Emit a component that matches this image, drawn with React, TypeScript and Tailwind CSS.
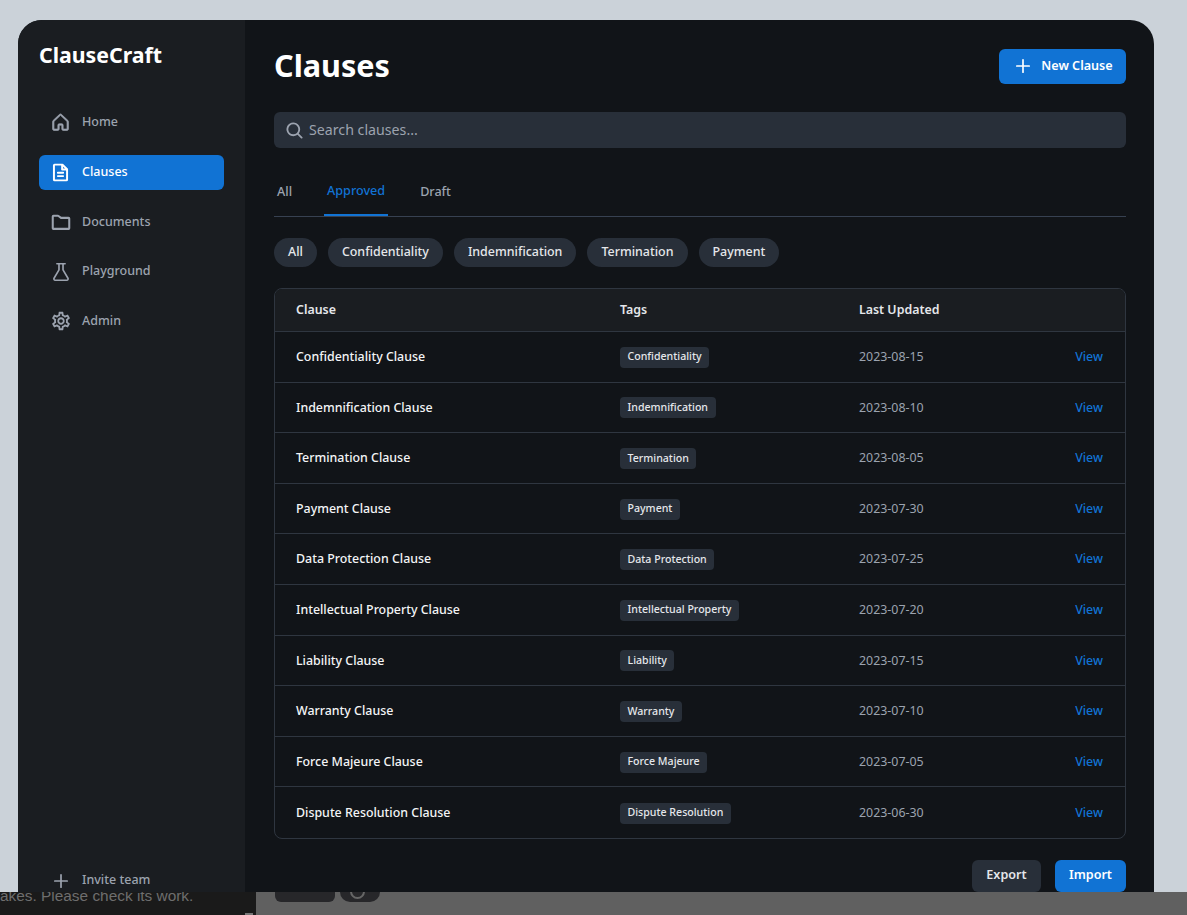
import React from "react";
import { PiFileTextBold, PiFolderSimpleBold, PiPlusBold, PiMagnifyingGlassBold } from "react-icons/pi";
import { MdOutlineSettings } from "react-icons/md";

function HomeIcon({ className }: { className?: string }) {
  return (
    <svg viewBox="0 0 256 256" fill="currentColor" stroke="currentColor" strokeWidth="9" className={className}>
      <path d="M218.83,103.77l-80-75.48a1.14,1.14,0,0,1-.11-.11,16,16,0,0,0-21.53,0l-.11.11L37.17,103.77A16,16,0,0,0,32,115.55V208a16,16,0,0,0,16,16H96a16,16,0,0,0,16-16V160h32v48a16,16,0,0,0,16,16h48a16,16,0,0,0,16-16V115.55A16,16,0,0,0,218.83,103.77ZM208,208H160V160a16,16,0,0,0-16-16H112a16,16,0,0,0-16,16v48H48V115.55l.11-.1L128,40l79.9,75.43.11.1Z" />
    </svg>
  );
}

function FlaskIcon({ className }: { className?: string }) {
  return (
    <svg viewBox="0 0 24 24" fill="none" stroke="currentColor" strokeWidth="1.8" strokeLinecap="round" strokeLinejoin="round" className={className}>
      <path d="M7.5 3h9M9.8 3v6.6L4.4 18.8A1.5 1.5 0 0 0 5.7 21h12.6a1.5 1.5 0 0 0 1.3-2.2l-5.4-9.2V3" />
    </svg>
  );
}

const nav = [
  { label: "Home", icon: HomeIcon, size: "size-[21px]" },
  { label: "Clauses", icon: PiFileTextBold, size: "size-[21px]", active: true },
  { label: "Documents", icon: PiFolderSimpleBold, size: "size-[22px]" },
  { label: "Playground", icon: FlaskIcon, size: "size-[22px]" },
  { label: "Admin", icon: MdOutlineSettings, size: "size-[22px]" },
];

const rows = [
  ["Confidentiality Clause", "Confidentiality", "2023-08-15"],
  ["Indemnification Clause", "Indemnification", "2023-08-10"],
  ["Termination Clause", "Termination", "2023-08-05"],
  ["Payment Clause", "Payment", "2023-07-30"],
  ["Data Protection Clause", "Data Protection", "2023-07-25"],
  ["Intellectual Property Clause", "Intellectual Property", "2023-07-20"],
  ["Liability Clause", "Liability", "2023-07-15"],
  ["Warranty Clause", "Warranty", "2023-07-10"],
  ["Force Majeure Clause", "Force Majeure", "2023-07-05"],
  ["Dispute Resolution Clause", "Dispute Resolution", "2023-06-30"],
];

const pills = ["All", "Confidentiality", "Indemnification", "Termination", "Payment"];

export default function App() {
  return (
    <div className="relative h-[915px] overflow-hidden bg-[#cbd2d9] pt-5 pl-[18px] font-['Noto_Sans',sans-serif]">
      {/* App window */}
      <div className="flex h-[885px] w-[1136px] overflow-hidden rounded-t-[24px] bg-[#111418]">
        <aside className="flex w-[227px] shrink-0 flex-col bg-[#1a1d21] px-[21px] pt-[20px]">
          <h1 className="text-[21.3px] leading-[29px] font-bold text-white">ClauseCraft</h1>
          <nav className="mt-[36px] flex flex-col gap-[14.7px]">
            {nav.map((item) => (
              <a
                key={item.label}
                className={
                  item.active
                    ? "flex h-[35px] items-center rounded-md bg-[#1173d4] text-[12.5px] font-medium text-white"
                    : "flex h-[35px] items-center rounded-md text-[12.5px] font-medium text-[#9ca3af]"
                }
              >
                <span className="flex w-[43px] justify-center">
                  <item.icon className={item.size} />
                </span>
                {item.label}
              </a>
            ))}
          </nav>
          <a className="mt-auto mb-[7px] flex h-[35px] items-center text-[12.5px] font-medium text-[#9ca3af]">
            <span className="flex w-[43px] justify-center">
              <PiPlusBold className="size-[18px]" />
            </span>
            Invite team
          </a>
        </aside>

        <main className="flex-1 pt-7 pr-[28px] pl-[29px]">
          <div className="flex h-[36px] items-center justify-between">
            <h2 className="pb-[2px] text-[30.6px] leading-[34px] font-bold text-white">Clauses</h2>
            <button className="flex h-[35px] w-[127px] items-center justify-center gap-[9px] rounded-md bg-[#1173d4] pl-[2px] text-[12.6px] font-semibold text-white">
              <PiPlusBold className="size-[18px]" />
              New Clause
            </button>
          </div>

          <div className="mt-7 flex h-9 items-center gap-[5px] rounded-md bg-[#282f39] pl-[11px] text-[14.2px] text-[#9ca3af]">
            <PiMagnifyingGlassBold className="size-[19px]" />
            Search clauses...
          </div>

          <div className="mt-[26px] flex h-[43px] items-stretch gap-[29px] border-b border-[#374151] text-[12.6px] font-medium">
            <span className="flex items-center px-[3px] pb-[6px] text-[#9ca3af]">All</span>
            <span className="flex items-center border-b-2 border-[#1173d4] px-[3px] pb-[5px] text-[#1173d4]">Approved</span>
            <span className="flex items-center px-[3px] pb-[6px] text-[#9ca3af]">Draft</span>
          </div>

          <div className="mt-[21px] flex gap-[11px]">
            {pills.map((p) => (
              <span key={p} className="flex h-[29px] items-center rounded-full bg-[#282f39] px-[14px] text-[12.45px] font-medium text-[#e5e7eb]">
                {p}
              </span>
            ))}
          </div>

          <div className="mt-[21px] overflow-hidden rounded-lg border border-[#2f3640] text-[12.4px]">
            <div className="grid h-[43px] grid-cols-[324px_239px_1fr_auto] items-center border-b border-[#2f3640] bg-[#1a1d21] pr-[22px] pl-[21px] font-semibold text-[#e5e7eb]">
              <span>Clause</span>
              <span>Tags</span>
              <span>Last Updated</span>
              <span />
            </div>
            {rows.map((r, i) => (
              <div
                key={r[0]}
                className={
                  i === rows.length - 1
                    ? "grid h-[50.6px] grid-cols-[324px_239px_1fr_auto] items-center pt-[1px] pr-[22px] pl-[21px]"
                    : "grid h-[50.6px] grid-cols-[324px_239px_1fr_auto] items-center border-b border-[#2f3640] pt-[1px] pr-[22px] pl-[21px]"
                }
              >
                <span className="font-medium text-[#f3f4f6]">{r[0]}</span>
                <span>
                  <span className="inline-flex h-[21px] items-center rounded bg-[#282f39] px-[7.5px] text-[10.6px] font-medium text-[#e5e7eb]">
                    {r[1]}
                  </span>
                </span>
                <span className="text-[#9ca3af]">{r[2]}</span>
                <a className="font-medium text-[#1173d4]">View</a>
              </div>
            ))}
          </div>

          <div className="mt-[21px] flex justify-end gap-[14px]">
            <button className="flex h-8 w-[69px] items-center justify-center rounded-md bg-[#282f39] text-[12.6px] font-semibold text-[#e5e7eb]">Export</button>
            <button className="flex h-8 w-[71px] items-center justify-center rounded-md bg-[#1173d4] text-[12.6px] font-semibold text-white">Import</button>
          </div>
        </main>
      </div>

      {/* Overlay strip at the bottom of the window */}
      <div className="absolute inset-x-0 top-[892px] flex h-[23px] bg-[#606060]">
        <div className="relative w-[256px] overflow-hidden bg-[#1a1a1a] font-['Liberation_Sans',sans-serif] text-[15.4px] leading-[8px] text-[#6e6e6e]">
          <span className="absolute top-0 left-0 whitespace-nowrap">akes. Please check its work.</span>
          <span className="absolute right-[3px] bottom-0 h-[2px] w-[8px] bg-[#777]" />
        </div>
        <div className="ml-[19px] h-[10px] w-[60px] rounded-b-md bg-[#27272a]" />
        <div className="relative ml-[5px] h-[10px] w-[40px] overflow-hidden rounded-b-xl bg-[#27272a]">
          <span className="absolute top-[-8px] left-[10px] size-[15px] rounded-full border-2 border-[#666]" />
        </div>
      </div>
    </div>
  );
}
